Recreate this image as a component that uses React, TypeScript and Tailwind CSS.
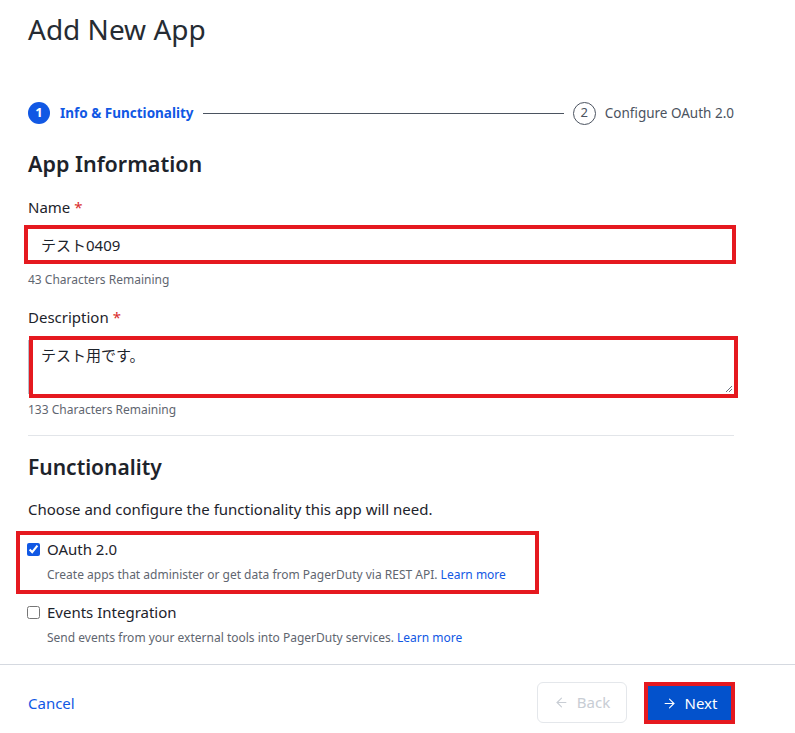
import { ArrowLeft, ArrowRight } from "lucide-react";

// 左下の縦線（テキストエリアの枠の一部）が赤枠の外側に見えている
export default function App() {
  return (
    <div className="w-[795px] h-[733px] bg-white flex flex-col font-['Segoe_UI','Noto_Sans','Noto_Sans_CJK_JP',sans-serif] text-[#1d232b]">
      <div className="flex-1 px-[28px]">
        <h1 className="pt-[10px] text-[28px] leading-[38px] text-[#262c33]">Add New App</h1>

        {/* Stepper */}
        <div className="mt-[53px] h-[24px] flex items-center w-[706px]">
          <div className="size-[22px] rounded-full bg-[#1158e4] text-white text-[13px] font-bold flex items-center justify-center">
            1
          </div>
          <span className="ml-[10px] text-[13.5px] font-bold text-[#1158e4]">Info &amp; Functionality</span>
          <div className="flex-1 mx-[9px] h-px bg-[#4b5360]" />
          <div className="size-[23px] rounded-full border border-[#4b5360] text-[#4b5360] text-[13px] flex items-center justify-center">
            2
          </div>
          <span className="ml-[9px] text-[13.5px] text-[#4b5360]">Configure OAuth 2.0</span>
        </div>

        <h2 className="mt-[24px] text-[21.5px] leading-[30px] font-semibold">App Information</h2>

        <label className="mt-[17px] block text-[15px] leading-[22px]">
          Name <span className="text-[#d92b2b]">*</span>
        </label>
        <div className="mt-[7px] -ml-[4px] w-[712px] h-[39px] border-4 border-[#e5191f]">
          <input
            readOnly
            value="テスト0409"
            className="w-full h-full pl-[13px] text-[15px] outline-none bg-white"
          />
        </div>
        <p className="mt-[8px] text-[12px] leading-[16px] text-[#5f6670]">43 Characters Remaining</p>

        <label className="mt-[18px] block text-[15px] leading-[22px]">
          Description <span className="text-[#d92b2b]">*</span>
        </label>
        <div className="mt-[8px] flex">
          <div className="w-[1px] h-[62px] py-[4px]">
            <div className="h-full bg-[#b8c0cc]" />
          </div>
          <div className="w-[709px] h-[62px] border-4 border-[#e5191f] relative">
            <textarea
              readOnly
              value="テスト用です。"
              className="w-full h-full resize-none pl-[8px] pt-[4px] text-[15px] leading-[22px] outline-none"
            />
            <svg className="absolute right-[1px] bottom-[1px]" width="8" height="8" viewBox="0 0 8 8">
              <path d="M7 1L1 7M7 4L4 7" stroke="#6b7280" strokeWidth="1" />
            </svg>
          </div>
        </div>
        <p className="mt-[4px] text-[12px] leading-[16px] text-[#5f6670]">133 Characters Remaining</p>

        <hr className="mt-[17px] w-[706px] border-t border-[#e2e5e9]" />

        <h2 className="mt-[16px] text-[21px] leading-[30px] font-semibold">Functionality</h2>
        <p className="mt-[16px] text-[15px] leading-[22px]">Choose and configure the functionality this app will need.</p>

        <div className="mt-[11px] -ml-[12px] w-[523px] border-4 border-[#e5191f] pl-[7px] pt-[3px] pb-[6px]">
          <label className="flex items-center h-[22px] gap-[7px]">
            <input type="checkbox" readOnly checked className="size-[13px] accent-[#1158e4]" />
            <span className="text-[15px]">OAuth 2.0</span>
          </label>
          <p className="mt-[6px] ml-[20px] text-[12px] leading-[18px] text-[#5f6670]">
            Create apps that administer or get data from PagerDuty via REST API.{" "}
            <span className="text-[#1158e4]">Learn more</span>
          </p>
        </div>

        <div className="mt-[7px] -ml-[1px]">
          <label className="flex items-center h-[22px] gap-[7px]">
            <input type="checkbox" readOnly className="size-[13px]" />
            <span className="text-[15px]">Events Integration</span>
          </label>
          <p className="mt-[6px] ml-[20px] text-[12px] leading-[18px] text-[#5f6670]">
            Send events from your external tools into PagerDuty services.{" "}
            <span className="text-[#1158e4]">Learn more</span>
          </p>
        </div>
      </div>

      {/* Footer */}
      <div className="h-[69px] border-t border-[#d5d9e0] flex items-start pt-[17px] pl-[28px] pr-[60px]">
        <span className="mt-[10px] text-[15px] leading-[22px] text-[#1158e4]">Cancel</span>
        <div className="ml-auto flex items-start">
          <button className="w-[90px] h-[41px] rounded-md border border-[#e4e7eb] text-[#c8cdd4] text-[15px] flex items-center justify-center gap-[8px]">
            <ArrowLeft size={15} strokeWidth={1.75} />
            Back
          </button>
          <div className="ml-[17px] border-4 border-[#e5191f]">
            <button className="w-[83px] h-[34px] bg-[#0352cc] text-white text-[15px] flex items-center justify-center gap-[8px]">
              <ArrowRight size={15} strokeWidth={1.75} />
              Next
            </button>
          </div>
        </div>
      </div>
    </div>
  );
}
